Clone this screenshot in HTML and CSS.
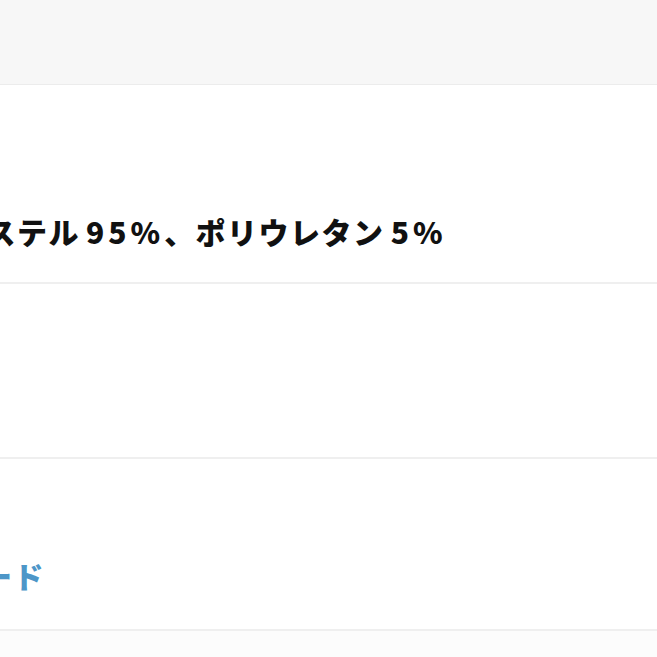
FILE: index.html
```html
<!DOCTYPE html>
<html lang="ja">
<head>
    <meta charset="UTF-8" />
    <meta name="viewport" content="width=device-width, initial-scale=1.0" />
    <title>商品詳細</title>
    <link rel="stylesheet" href="styles.css">
</head>
<body>

<div id="page">
    <div id="top-bar"></div>
    <div class="row row-material">
        <div class="row-value">ポリエステル<span class="num">95%</span>、ポリウレタン<span class="num">5%</span></div>
    </div>
    <div class="row row-empty"></div>
    <div class="row row-link">
        <div class="row-value link">ダウンロード</div>
    </div>
    <div id="bottom"></div>
</div>

</body>
</html>
```

FILE: styles.css
```css
* { box-sizing: border-box; }
body {
    margin: 0;
    font-family: "Noto Sans CJK JP", "Noto Sans", sans-serif;
    background-color: #fcfcfc;
    overflow: hidden;
}
#page {
    width: 657px;
    height: 657px;
    display: flex;
    flex-direction: column;
}
#top-bar {
    height: 85px;
    background: #f7f7f7;
    border-bottom: 1px solid #ececec;
    flex-shrink: 0;
}
.row {
    background: #fff;
    border-bottom: 2px solid #efefef;
    flex-shrink: 0;
}
.row-material { height: 199px; padding-top: 128px; }
.row-empty { height: 175px; }
.row-link { height: 172px; padding-top: 98px; }
.row-value {
    margin-left: -109px;
    font-size: 30px;
    line-height: 36px;
    font-weight: 900;
    letter-spacing: 1.5px;
    color: #111;
    white-space: nowrap;
}
.num {
    letter-spacing: 4px;
    margin-left: 6px;
}
.link {
    margin-left: -144px;
    color: #4d96c8;
}
#bottom {
    flex: 1;
    background: #fcfcfc;
}
```
